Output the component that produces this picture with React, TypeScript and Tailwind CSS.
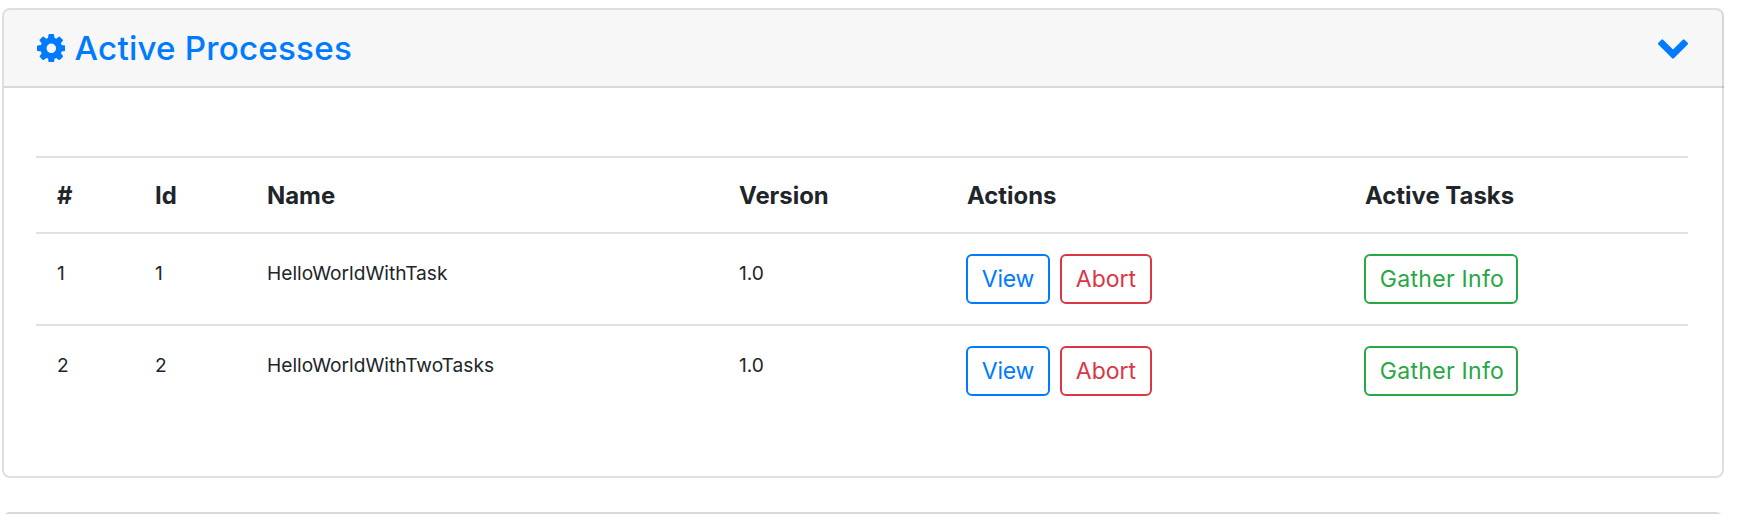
import React from "react";

function Gear() {
  return (
    <svg className="h-[28.6px] w-[28.6px] shrink-0" viewBox="0 128 1536 1536" fill="currentColor" aria-hidden="true">
      <path d="M1024 896q0-106-75-181t-181-75-181 75-75 181 75 181 181 75 181-75 75-181zm512-109v222q0 12-8 23t-20 13l-185 28q-19 54-39 91 35 50 107 138 10 12 10 25t-9 23q-27 37-99 108t-94 71q-12 0-26-9l-138-108q-44 23-91 38-16 136-29 186-7 28-36 28h-222q-14 0-24.500-8.500t-11.500-21.500l-28-184q-49-16-90-37l-141 107q-10 9-25 9-14 0-25-11-126-114-165-168-7-10-7-23 0-12 8-23 15-21 51-66.500t54-70.500q-27-50-41-99l-183-27q-13-2-21-12.500t-8-23.500v-222q0-12 8-23t19-13l186-28q14-46 39-92-40-57-107-138-10-12-10-24 0-10 9-23 26-36 98.500-107.500t94.500-71.500q13 0 26 10l138 107q44-23 91-38 16-136 29-186 7-28 36-28h222q14 0 24.500 8.500t11.500 21.500l28 184q49 16 90 37l142-107q9-9 24-9 13 0 25 10 129 119 165 170 7 8 7 22 0 12-8 23-15 21-51 66.500t-54 70.500q26 50 41 98l183 28q13 2 21 12.500t8 23.500z" />
    </svg>
  );
}

function Chevron() {
  return (
    <svg className="mt-[2px] h-[20px] w-[30px] shrink-0" viewBox="90 533 1612 1035" fill="currentColor" aria-hidden="true">
      <path d="M1683 808l-742 741q-19 19-45 19t-45-19l-742-741q-19-19-19-45.500t19-45.500l166-165q19-19 45-19t45 19l531 531 531-531q19-19 45-19t45 19l166 165q19 19 19 45.500t-19 45.500z" />
    </svg>
  );
}

const processes = [
  { id: 1, name: "HelloWorldWithTask", version: "1.0", task: "Gather Info" },
  { id: 2, name: "HelloWorldWithTwoTasks", version: "1.0", task: "Gather Info" },
];

const head = "h-[76px] border-t-2 border-[#dee2e6] pb-[18px] pt-[20px] align-top text-[23.9px] font-bold leading-[36px]";
const cell = "h-[92px] border-t-2 border-[#dee2e6] pt-[25px] align-top text-[19.15px] leading-[28px]";
const actionCell = "h-[92px] border-t-2 border-[#dee2e6] px-5 pt-5 align-top";
const button = "flex h-[50px] items-center justify-center whitespace-nowrap rounded-[6px] border-2 text-[23px]";

export default function App() {
  return (
    <div className="h-[514px] overflow-hidden bg-white pl-[2px] pt-[8px] font-['Inter','Liberation_Sans',sans-serif] text-[#212529]">
      <section className="h-[470px] w-[1722px] rounded-[8px] border-2 border-black/[.125]">
        <header className="-mr-[2px] flex h-[78px] items-center justify-between rounded-t-[6px] border-b-2 border-black/[.125] bg-black/[.03] pl-[32.5px] pr-[36px] text-[#007bff]">
          <h2 className="flex items-center gap-[9.500px] text-[33.2px] font-medium leading-[40px] tracking-[0.2px]">
            <Gear />
            Active Processes
          </h2>
          <Chevron />
        </header>
        <div className="px-[32px] pt-[68px]">
          <table className="w-[1652px] table-fixed border-separate border-spacing-0 text-left">
            <colgroup>
              <col className="w-[98px]" />
              <col className="w-[113px]" />
              <col className="w-[472px]" />
              <col className="w-[227px]" />
              <col className="w-[398px]" />
              <col className="w-[344px]" />
            </colgroup>
            <thead>
              <tr>
                <th className={`${head} pl-[21px]`}>#</th>
                <th className={`${head} pl-[21px]`}>Id</th>
                <th className={`${head} pl-[20px]`}>Name</th>
                <th className={`${head} pl-[20px]`}>Version</th>
                <th className={`${head} pl-[21px]`}>Actions</th>
                <th className={`${head} pl-[21px]`}>Active Tasks</th>
              </tr>
            </thead>
            <tbody>
              {processes.map((p) => (
                <tr key={p.id}>
                  <td className={`${cell} pl-[21px]`}>{p.id}</td>
                  <td className={`${cell} pl-[21px]`}>{p.id}</td>
                  <td className={`${cell} pl-[20px]`}>{p.name}</td>
                  <td className={`${cell} pl-[20px]`}>{p.version}</td>
                  <td className={actionCell}>
                    <div className="flex gap-[10px]">
                      <button className={`${button} w-[84px] border-[#007bff] tracking-[-0.2px] text-[#007bff]`}>View</button>
                      <button className={`${button} w-[92px] border-[#dc3545] text-[#dc3545]`}>Abort</button>
                    </div>
                  </td>
                  <td className={actionCell}>
                    <button className={`${button} w-[154px] border-[#28a745] pl-[2px] tracking-[0.3px] text-[#28a745]`}>{p.task}</button>
                  </td>
                </tr>
              ))}
            </tbody>
          </table>
        </div>
      </section>
      <section className="mt-[34px] h-[78px] w-[1722px] rounded-[8px] border-2 border-black/[.125] bg-black/[.03]" />
    </div>
  );
}
